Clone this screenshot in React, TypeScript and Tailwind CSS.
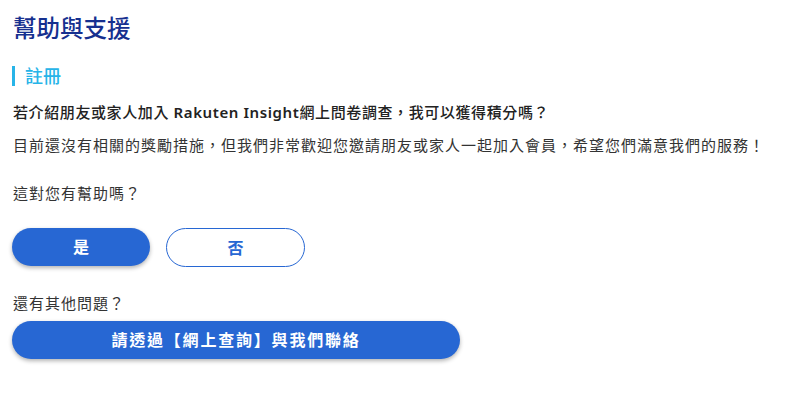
import React from "react";

const font = { fontFamily: '"Noto Sans", "Noto Sans CJK TC", sans-serif' };

export default function App() {
  return (
    <div className="w-[810px] h-[413px] bg-white pl-3 pr-3" style={font}>
      <h1 className="pt-[12px] text-[23.5px] leading-[32px] font-medium text-[#16308f] pl-[1px]">幫助與支援</h1>
      <div className="mt-[21px] flex items-center h-[22px]">
        <div className="w-[3px] h-[20px] bg-[#27b4e8]" />
        <h2 className="ml-[10px] text-[18px] leading-[22px] font-medium text-[#27b4e8]">註冊</h2>
      </div>
      <p className="mt-[13px] pl-[1px] text-[15px] leading-[24px] font-medium text-[#222] tracking-[0.6px]">
        若介紹朋友或家人加入 <span className="font-semibold">Rakuten Insight</span>網上問卷調查，我可以獲得積分嗎？
      </p>
      <p className="mt-[9px] pl-[1px] text-[15px] leading-[24px] text-[#333] tracking-[1px]">
        目前還沒有相關的獎勵措施，但我們非常歡迎您邀請朋友或家人一起加入會員，希望您們滿意我們的服務！
      </p>
      <p className="mt-[24px] pl-[1px] text-[15px] leading-[24px] text-[#333] tracking-[1px]">這對您有幫助嗎？</p>
      <div className="mt-[23px] flex gap-4">
        <button className="w-[138px] h-[38px] rounded-full bg-[#2767d3] text-white text-[16px] font-semibold shadow-[0_2px_4px_rgba(0,0,0,0.3)]">是</button>
        <button className="w-[139px] h-[39px] rounded-full border border-[#2767d3] bg-white text-[#2767d3] text-[16px] font-semibold">否</button>
      </div>
      <p className="mt-[24px] pl-[1px] text-[15px] leading-[24px] text-[#333] tracking-[1px]">還有其他問題？</p>
      <button className="mt-[6px] w-[448px] h-[38px] rounded-full bg-[#2767d3] text-white text-[16px] font-semibold tracking-[1.8px] shadow-[0_2px_4px_rgba(0,0,0,0.3)]">
        請透過【網上查詢】與我們聯絡
      </button>
    </div>
  );
}
